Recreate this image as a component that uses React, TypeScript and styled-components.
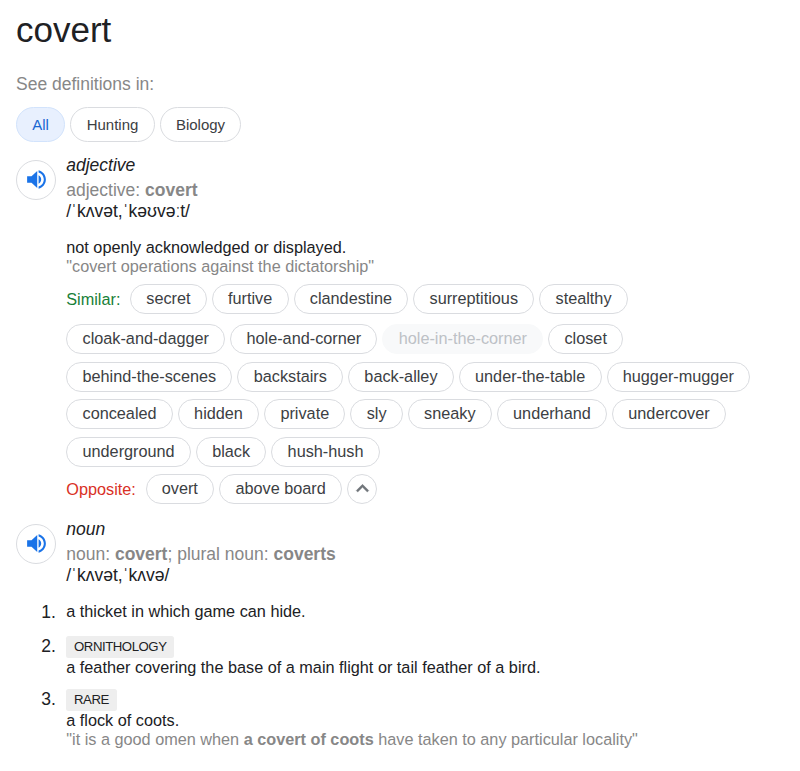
import React from 'react';
import styled, { createGlobalStyle } from 'styled-components';

const GlobalStyle = createGlobalStyle`
  body {
    margin: 0;
    background: #fff;
    color: #202124;
    font-family: "Liberation Sans", Arial, sans-serif;
  }
`;

const Page = styled.main`
  box-sizing: border-box;
  width: 800px;
  height: 771px;
  padding: 10px 16px 0;
  overflow: hidden;
`;

const Title = styled.h1`
  margin: 0;
  font-size: 35px;
  line-height: 40px;
  font-weight: 400;
`;

const FilterLabel = styled.div`
  margin-top: 23px;
  font-size: 17.5px;
  line-height: 22px;
  color: #878787;
`;

const Filters = styled.div`
  display: flex;
  gap: 5px;
  margin-top: 12px;
`;

const Filter = styled.button<{ $width: number; $active?: boolean }>`
  box-sizing: border-box;
  width: ${(p) => p.$width}px;
  height: 35px;
  padding: 0;
  border: 1px solid ${(p) => (p.$active ? '#d2e3fc' : '#dadce0')};
  border-radius: 18px;
  background: ${(p) => (p.$active ? '#e8f0fe' : '#fff')};
  color: ${(p) => (p.$active ? '#1967d2' : '#3c4043')};
  font: 15px/33px "Liberation Sans", Arial, sans-serif;
`;

const Entry = styled.section<{ $top: number }>`
  display: grid;
  grid-template-columns: 40px 1fr;
  column-gap: 10.25px;
  align-items: start;
  margin-top: ${(p) => p.$top}px;
`;

const Speaker = styled.button`
  display: flex;
  align-items: center;
  justify-content: center;
  box-sizing: border-box;
  width: 40px;
  height: 40px;
  margin-top: 6px;
  padding: 0 0 2px;
  border: 1px solid #dadce0;
  border-radius: 50%;
  background: #fff;
`;

const PartOfSpeech = styled.div`
  font-size: 17.5px;
  line-height: 22px;
  font-style: italic;
`;

const Forms = styled.div`
  margin-top: 3px;
  font-size: 17.5px;
  line-height: 22px;
  color: #878787;
`;

const Phonetic = styled.div`
  font-size: 17.5px;
  line-height: 20px;
`;

const Sense = styled.div`
  font-size: 16.25px;
  line-height: 19px;
`;

const FirstSense = styled(Sense)`
  margin-top: 17px;
`;

const Example = styled.div`
  font-size: 16.25px;
  line-height: 19px;
  color: #878787;
`;

const Thesaurus = styled.div`
  display: flex;
  flex-direction: column;
  gap: 7.5px;
  margin-top: 8px;
`;

const ChipRow = styled.div<{ $after?: number }>`
  display: flex;
  align-items: center;
  gap: 5px;
  height: 30px;
  margin-bottom: ${(p) => p.$after ?? 0}px;
`;

const RowLabel = styled.span<{ $tone: string; $width: number }>`
  width: ${(p) => p.$width}px;
  padding-top: 1px;
  font-size: 16.25px;
  color: ${(p) => p.$tone};
`;

const Chip = styled.button<{ $muted?: boolean }>`
  box-sizing: border-box;
  height: 30px;
  padding: 0 15.25px 1.6px;
  border: 1px solid ${(p) => (p.$muted ? '#f8f9fa' : '#dadce0')};
  border-radius: 15px;
  background: ${(p) => (p.$muted ? '#f8f9fa' : '#fff')};
  color: ${(p) => (p.$muted ? '#bdc1c6' : '#3c4043')};
  font: 16.25px/26px "Liberation Sans", Arial, sans-serif;
  white-space: nowrap;
`;

const CollapseButton = styled.button`
  display: flex;
  align-items: center;
  justify-content: center;
  box-sizing: border-box;
  width: 30px;
  height: 30px;
  padding: 0 0 1px;
  border: 1px solid #dadce0;
  border-radius: 50%;
  background: #fff;
`;

const Senses = styled.ol`
  margin: 17px 0 0 -25px;
  padding: 0;
  list-style: none;
`;

const SenseItem = styled.li<{ $after: number }>`
  display: grid;
  grid-template-columns: 25px 1fr;
  align-items: start;
  margin-bottom: ${(p) => p.$after}px;
`;

const Num = styled.span`
  font-size: 17.5px;
  line-height: 20px;
`;

const Tag = styled.span`
  display: block;
  width: max-content;
  height: 22px;
  padding: 0 7.75px;
  border-radius: 2.5px;
  background: #eee;
  font-size: 13.2px;
  letter-spacing: -0.45px;
  line-height: 21px;
`;

function SpeakerButton() {
  return (
    <Speaker aria-label="Listen">
      <svg width="25" height="25" viewBox="0 0 24 24" fill="#1a73e8">
        <path d="M3 8.8v6.4h4.2l5.5 5V3.8l-5.5 5H3zm13.5 3.2c0-1.77-1.02-3.29-2.5-4.03v8.05c1.48-.73 2.5-2.25 2.5-4.02zM14 3.23v2.06c2.89.86 5 3.54 5 6.71s-2.11 5.85-5 6.71v2.06c4.01-.91 7-4.49 7-8.77s-2.99-7.86-7-8.77z" />
      </svg>
    </Speaker>
  );
}

const similarRows = [
  ['cloak-and-dagger', 'hole-and-corner', 'hole-in-the-corner', 'closet'],
  ['behind-the-scenes', 'backstairs', 'back-alley', 'under-the-table', 'hugger-mugger'],
  ['concealed', 'hidden', 'private', 'sly', 'sneaky', 'underhand', 'undercover'],
  ['underground', 'black', 'hush-hush'],
];

export default function App() {
  return (
    <>
      <GlobalStyle />
      <Page>
        <Title>covert</Title>
        <FilterLabel>See definitions in:</FilterLabel>
        <Filters>
          <Filter $width={49} $active>All</Filter>
          <Filter $width={85}>Hunting</Filter>
          <Filter $width={81}>Biology</Filter>
        </Filters>

        <Entry $top={12}>
          <SpeakerButton />
          <div>
            <PartOfSpeech>adjective</PartOfSpeech>
            <Forms>adjective: <b>covert</b></Forms>
            <Phonetic>/ˈkʌvət,ˈkəʊvəːt/</Phonetic>
            <FirstSense>not openly acknowledged or displayed.</FirstSense>
            <Example>"covert operations against the dictatorship"</Example>
            <Thesaurus>
              <ChipRow $after={2.5}>
                <RowLabel $tone="#188038" $width={58.75}>Similar:</RowLabel>
                {['secret', 'furtive', 'clandestine', 'surreptitious', 'stealthy'].map((w) => (
                  <Chip key={w}>{w}</Chip>
                ))}
              </ChipRow>
              {similarRows.map((row) => (
                <ChipRow key={row[0]}>
                  {row.map((w) => (
                    <Chip key={w} $muted={w === 'hole-in-the-corner'}>{w}</Chip>
                  ))}
                </ChipRow>
              ))}
              <ChipRow>
                <RowLabel $tone="#d93025" $width={74.25}>Opposite:</RowLabel>
                <Chip>overt</Chip>
                <Chip>above board</Chip>
                <CollapseButton aria-label="Show less">
                  <svg width="25" height="25" viewBox="0 0 24 24" fill="#70757a" stroke="#70757a" strokeWidth="0.4">
                    <path d="M12 8l-6 6 1.41 1.41L12 10.83l4.59 4.58L18 14z" />
                  </svg>
                </CollapseButton>
              </ChipRow>
            </Thesaurus>
          </div>
        </Entry>

        <Entry $top={14}>
          <SpeakerButton />
          <div>
            <PartOfSpeech>noun</PartOfSpeech>
            <Forms>noun: <b>covert</b>; plural noun: <b>coverts</b></Forms>
            <Phonetic>/ˈkʌvət,ˈkʌvə/</Phonetic>
            <Senses>
              <SenseItem $after={14}>
                <Num>1.</Num>
                <Sense>a thicket in which game can hide.</Sense>
              </SenseItem>
              <SenseItem $after={12}>
                <Num>2.</Num>
                <div>
                  <Tag>ORNITHOLOGY</Tag>
                  <Sense>a feather covering the base of a main flight or tail feather of a bird.</Sense>
                </div>
              </SenseItem>
              <SenseItem $after={0}>
                <Num>3.</Num>
                <div>
                  <Tag>RARE</Tag>
                  <Sense>a flock of coots.</Sense>
                  <Example>"it is a good omen when <b>a covert of coots</b> have taken to any particular locality"</Example>
                </div>
              </SenseItem>
            </Senses>
          </div>
        </Entry>
      </Page>
    </>
  );
}
